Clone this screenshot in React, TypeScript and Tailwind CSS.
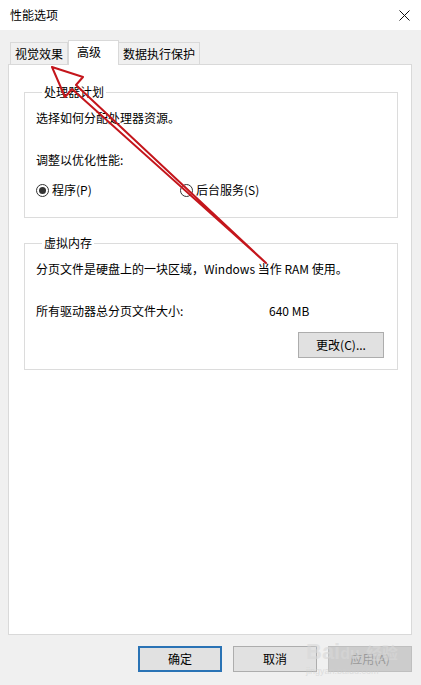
const font = { fontFamily: '"Noto Sans CJK SC", "Noto Sans", sans-serif' };

function Radio({ checked }: { checked?: boolean }) {
  return (
    <span className="flex h-[13px] w-[13px] items-center justify-center rounded-full border border-[#333] bg-white">
      {checked && <span className="h-[7px] w-[7px] rounded-full bg-[#333]" />}
    </span>
  );
}

function Group({ title, children, className }: { title: string; children: React.ReactNode; className?: string }) {
  return (
    <fieldset className={"border border-[#dcdcdc] px-[11px] " + (className ?? "")}>
      <legend className="ml-[6px] px-[2px] text-[12px] leading-[16px]">{title}</legend>
      {children}
    </fieldset>
  );
}

function Button({ label, kind }: { label: string; kind?: "default" | "disabled" }) {
  const cls =
    kind === "default"
      ? "border-2 border-[#2a73b5] bg-[#e1e1e1] text-black"
      : kind === "disabled"
        ? "border border-[#bfbfbf] bg-[#cccccc] text-[#9a9a9a]"
        : "border border-[#adadad] bg-[#e1e1e1] text-black";
  return (
    <button className={"flex h-[26px] w-[84px] items-center justify-center text-[12px] " + cls}>
      {label}
    </button>
  );
}

export default function App() {
  return (
    <div className="relative h-[685px] w-[421px] overflow-hidden bg-[#f0f0f0] text-black" style={font}>
      {/* title bar */}
      <div className="flex h-[30px] items-center justify-between bg-white pl-[10px] pr-[11px]">
        <span className="text-[12px]">性能选项</span>
        <svg width="11" height="11" viewBox="0 0 11 11">
          <path d="M0.5 0.5 L10.5 10.5 M10.5 0.5 L0.5 10.5" stroke="#111" strokeWidth="1" fill="none" />
        </svg>
      </div>

      <div className="px-[8px] pt-[10px]">
        {/* tabs */}
        <div className="flex h-[24px] items-end pl-[2px]">
          <div className="flex h-[22px] w-[58px] items-center justify-center border border-b-0 border-[#d9d9d9] bg-[#f0f0f0] text-[12px]">
            视觉效果
          </div>
          <div className="relative z-10 -mb-px flex h-[25px] w-[51px] items-start justify-start border border-b-0 border-[#d9d9d9] bg-white pl-[8px] pt-[2px] text-[12px]">
            高级
          </div>
          <div className="flex h-[22px] w-[81px] items-center justify-center border border-b-0 border-l-0 border-[#d9d9d9] bg-[#f0f0f0] text-[12px]">
            数据执行保护
          </div>
        </div>

        {/* tab panel */}
        <div className="h-[571px] w-[404px] border border-[#d9d9d9] bg-white pl-[15px] pr-[13px] pt-[19px]">
          <Group title="处理器计划" className="pb-[19px]">
            <p className="mt-[10px] text-[12px] leading-[16px]">选择如何分配处理器资源。</p>
            <p className="mt-[26px] text-[12px] leading-[16px]">调整以优化性能:</p>
            <div className="mt-[14px] flex h-[16px] items-center text-[12px]">
              <div className="flex w-[144px] items-center gap-[3px]">
                <Radio checked />
                <span>程序(P)</span>
              </div>
              <div className="flex items-center gap-[3px]">
                <Radio />
                <span>后台服务(S)</span>
              </div>
            </div>
          </Group>

          <Group title="虚拟内存" className="mt-[17px] pb-[11px]">
            <p className="mt-[10px] text-[12px] leading-[16px]">分页文件是硬盘上的一块区域，Windows 当作 RAM 使用。</p>
            <div className="mt-[26px] flex text-[12px] leading-[16px]">
              <span className="w-[233px]">所有驱动器总分页文件大小:</span>
              <span>640 MB</span>
            </div>
            <div className="mt-[13px] flex justify-end pr-[2px]">
              <button className="flex h-[26px] w-[86px] items-center justify-center border border-[#adadad] bg-[#e1e1e1] text-[12px]">
                更改(C)...
              </button>
            </div>
          </Group>
        </div>

        {/* dialog buttons */}
        <div className="mt-[11px] flex gap-[11px] pl-[130px]">
          <Button label="确定" kind="default" />
          <Button label="取消" />
          <Button label="应用(A)" kind="disabled" />
        </div>
      </div>

      {/* red annotation arrow */}
      <svg className="pointer-events-none absolute left-0 top-0" width="421" height="685">
        <polygon
          points="52,67 83,77 76,85 266,263 72,89 65,97"
          fill="none"
          stroke="#c4161c"
          strokeWidth="2"
          strokeLinejoin="round"
        />
      </svg>

      {/* watermark */}
      <div className="pointer-events-none absolute left-[306px] top-[640px] flex flex-col items-start opacity-60">
        <span className="text-[22px] font-bold leading-[24px] text-[#d8d8d8]" style={{ fontFamily: '"Liberation Sans", sans-serif' }}>
          Bai<span className="text-[16px]">du</span> <span className="text-[16px]" style={font}>经验</span>
        </span>
        <span className="text-[9px] leading-[10px] text-[#d0d0d0]" style={{ fontFamily: '"Liberation Sans", sans-serif' }}>
          jingyan.baidu.com
        </span>
      </div>
    </div>
  );
}
